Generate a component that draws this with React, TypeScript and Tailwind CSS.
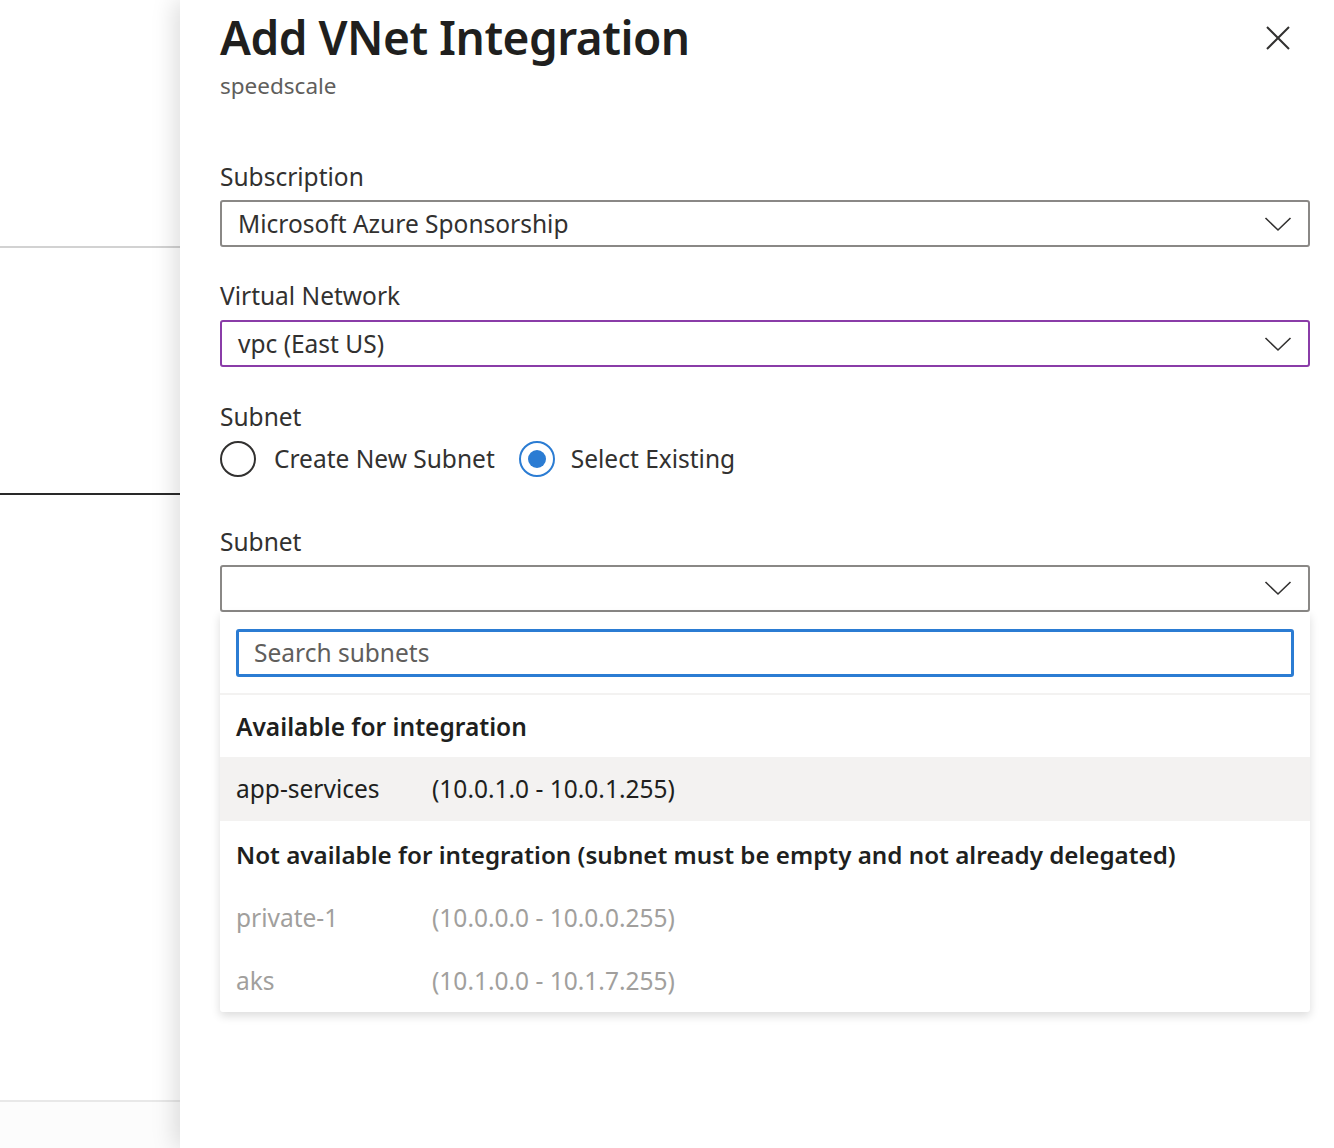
import React from "react";

const font = { fontFamily: '"Noto Sans", "Open Sans", sans-serif' };

function Chevron() {
  return (
    <svg width="28" height="16" viewBox="0 0 28 16" fill="none">
      <path d="M1.5 2 L14 14 L26.5 2" stroke="#323130" strokeWidth="1.6" />
    </svg>
  );
}

function Select({ value, purple }: { value?: string; purple?: boolean }) {
  return (
    <div
      className={
        "flex h-[47px] items-center justify-between rounded-[3px] border-2 pl-[16px] pr-[16px] " +
        (purple ? "border-[#8a3ca8]" : "border-[#8a8886]")
      }
    >
      <span className="pt-[2px] text-[24.5px] text-[#323130]">{value}</span>
      <Chevron />
    </div>
  );
}

export default function App() {
  return (
    <div className="flex h-[1148px] w-[1334px] overflow-hidden bg-white" style={font}>
      <div className="flex w-[180px] shrink-0 flex-col">
        <div className="h-[248px] border-b-2 border-[#d2d2d2]" />
        <div className="h-[247px] border-b-2 border-[#292929]" />
        <div className="h-[607px] border-b-2 border-[#e8e8e8]" />
        <div className="flex-1 bg-[#fcfcfc]" />
      </div>
      <div className="relative z-10 flex flex-1 flex-col bg-white pl-[40px] pr-[24px] shadow-[-6px_0_22px_rgba(0,0,0,0.13)]">
        <div className="flex items-start justify-between">
          <div className="flex flex-col">
            <h1 className="mt-[6px] text-[46px] font-semibold leading-[62px] tracking-[-0.5px] text-[#201f1e]">
              Add VNet Integration
            </h1>
            <div className="mt-[2px] text-[22.5px] leading-[32px] text-[#605e5c]">speedscale</div>
          </div>
          <svg className="mr-[20px] mt-[26px]" width="24" height="24" viewBox="0 0 24 24" fill="none">
            <path d="M1 1 L23 23 M23 1 L1 23" stroke="#323130" strokeWidth="2" />
          </svg>
        </div>

        <div className="mt-[58px] text-[24.5px] leading-[34px] text-[#323130]">Subscription</div>
        <div className="mt-[6px]">
          <Select value="Microsoft Azure Sponsorship" />
        </div>

        <div className="mt-[32px] text-[24.5px] leading-[34px] text-[#323130]">Virtual Network</div>
        <div className="mt-[7px]">
          <Select value="vpc (East US)" purple />
        </div>

        <div className="mt-[33px] text-[24.5px] leading-[34px] text-[#323130]">Subnet</div>
        <div className="mt-[7px] flex items-center">
          <div className="h-[36px] w-[36px] rounded-full border-2 border-[#323130]" />
          <span className="ml-[18px] text-[24.5px] text-[#323130]">Create New Subnet</span>
          <div className="ml-[24px] flex h-[36px] w-[36px] items-center justify-center rounded-full border-2 border-[#2b7cd3]">
            <div className="h-[18px] w-[18px] rounded-full bg-[#2b7cd3]" />
          </div>
          <span className="ml-[16px] text-[24.5px] text-[#323130]">Select Existing</span>
        </div>

        <div className="mt-[47px] text-[24.5px] leading-[34px] text-[#323130]">Subnet</div>
        <div className="mt-[6px]">
          <Select />
        </div>

        <div className="rounded-b-[3px] bg-white shadow-[0_4px_10px_rgba(0,0,0,0.14)]">
          <div className="px-[16px] pt-[17px] pb-[16px]">
            <div className="flex h-[48px] items-center rounded-[3px] border-[3px] border-[#2b7cd3] pl-[15px]">
              <span className="pt-[2px] text-[24.5px] text-[#605e5c]">Search subnets</span>
            </div>
          </div>
          <div className="h-[2px] bg-[#f3f2f1]" />
          <div className="flex h-[62px] items-center px-[16px] pt-[4px] text-[24.5px] font-semibold text-[#201f1e]">
            Available for integration
          </div>
          <div className="flex h-[64px] items-center bg-[#f3f2f1] px-[16px] pt-[2px] text-[24.5px] text-[#201f1e]">
            <span className="w-[196px]">app-services</span>
            <span>(10.0.1.0 - 10.0.1.255)</span>
          </div>
          <div className="flex h-[68px] items-center px-[16px] text-[24.2px] font-semibold text-[#201f1e]">
            Not available for integration (subnet must be empty and not already delegated)
          </div>
          <div className="flex h-[58px] items-center px-[16px] pt-[2px] text-[24.5px] text-[#a19f9d]">
            <span className="w-[196px]">private-1</span>
            <span>(10.0.0.0 - 10.0.0.255)</span>
          </div>
          <div className="flex h-[65px] items-center px-[16px] pt-[4px] text-[24.5px] text-[#a19f9d]">
            <span className="w-[196px]">aks</span>
            <span>(10.1.0.0 - 10.1.7.255)</span>
          </div>
        </div>
      </div>
    </div>
  );
}
